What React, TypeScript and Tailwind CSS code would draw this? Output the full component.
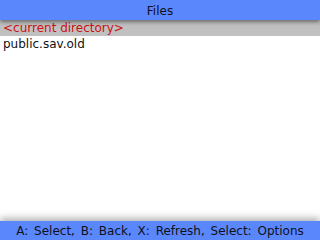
import React from 'react';

const files = ['public.sav.old'];

export default function App() {
  return (
    <div className="w-[320px] h-[240px] flex flex-col bg-white overflow-hidden font-['DejaVu_Sans',sans-serif] text-[12px] leading-[16px] text-[#111]">
      <div className="relative z-10 h-[20px] shrink-0 bg-[#5b87fd] flex items-center justify-center shadow-[0_2px_4px_rgba(0,0,0,0.45)]">
        <span className="text-[#101018] pt-[1px]">Files</span>
      </div>
      <div className="flex-1 flex flex-col">
        <div className="h-[16px] bg-[#c0c0c0] pl-[3px] text-[#cc1111] flex items-end">
          &lt;current directory&gt;
        </div>
        {files.map((f) => (
          <div key={f} className="h-[16px] pl-[3px] flex items-end">
            {f}
          </div>
        ))}
      </div>
      <div className="relative z-10 h-[19px] shrink-0 bg-[#5b87fd] flex items-center justify-center shadow-[0_-3px_7px_rgba(0,0,0,0.3)]">
        <span className="text-[#101018] [word-spacing:2px] pt-[1px]">A: Select, B: Back, X: Refresh, Select: Options</span>
      </div>
    </div>
  );
}
